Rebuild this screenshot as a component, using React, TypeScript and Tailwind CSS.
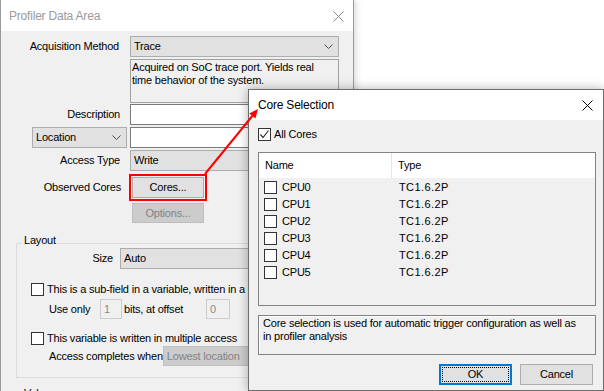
import React from "react";

const Chevron = () => (
  <svg width="9" height="5" viewBox="0 0 9 5" className="shrink-0">
    <path d="M0.5 0.5 L4.5 4.5 L8.5 0.5" stroke="#4d4d4d" strokeWidth="1" fill="none" />
  </svg>
);

const CloseX = ({ color }: { color: string }) => (
  <svg width="11" height="11" viewBox="0 0 11 11" className="shrink-0">
    <path d="M0.5 0.5 L10.5 10.5 M10.5 0.5 L0.5 10.5" stroke={color} strokeWidth="1" fill="none" />
  </svg>
);

const Combo = ({ text, className }: { text: string; className: string }) => (
  <div
    className={
      "flex items-center justify-between h-[21px] border border-[#adadad] bg-[#e1e1e1] pl-[3px] pr-[5px] " +
      className
    }
  >
    <span className="whitespace-nowrap">{text}</span>
    <Chevron />
  </div>
);

const Box = ({ checked }: { checked?: boolean }) => (
  <span className="inline-flex items-center justify-center w-[13px] h-[13px] border border-[#333333] bg-white shrink-0">
    {checked && (
      <svg width="11" height="11" viewBox="0 0 11 11">
        <path d="M1.5 5.5 L4 8.5 L9.5 1.5" stroke="#333333" strokeWidth="1.2" fill="none" />
      </svg>
    )}
  </span>
);

const cores = ["CPU0", "CPU1", "CPU2", "CPU3", "CPU4", "CPU5"];

export default function App() {
  return (
    <div className="relative w-[604px] h-[391px] overflow-hidden bg-white font-['Liberation_Sans',Arial,sans-serif] text-[11px] leading-[13px] tracking-[-0.2px] text-black">
      {/* Main dialog */}
      <div className="w-[354px] h-[420px] border-x border-[#9a9a9a] shadow-[2px_0_6px_rgba(0,0,0,0.15)] flex flex-col">
        <div className="h-[31px] shrink-0 bg-white flex items-center justify-between pl-[8px] pr-[9px] pt-[2px] text-[12px] text-[#9a9a9a]">
          <span>Profiler Data Area</span>
          <CloseX color="#8a8a8a" />
        </div>
        <div className="flex-1 bg-[#f0f0f0] pt-[5px]">
          {/* Acquisition method */}
          <div className="flex items-center h-[21px]">
            <div className="w-[118px] text-right whitespace-nowrap">Acquisition Method</div>
            <Combo text="Trace" className="ml-[11px] w-[209px]" />
          </div>
          <div className="flex mt-[2px]">
            <div className="w-[129px]" />
            <div className="w-[209px] h-[44px] border border-[#a0a0a0] bg-[#f0f0f0] px-[1px] pt-[1px]">
              Acquired on SoC trace port. Yields real
              <br />
              time behavior of the system.
            </div>
          </div>
          <div className="flex items-center h-[21px] mt-[1px]">
            <div className="w-[119px] text-right">Description</div>
            <div className="ml-[10px] w-[209px] h-[21px] border border-[#7a7a7a] bg-white" />
          </div>
          <div className="flex items-center h-[21px] mt-[2px]">
            <Combo text="Location" className="ml-[31px] w-[95px]" />
            <div className="ml-[3px] w-[209px] h-[21px] border border-[#7a7a7a] bg-white" />
          </div>
          <div className="flex items-center h-[21px] mt-[2px]">
            <div className="w-[119px] text-right">Access Type</div>
            <Combo text="Write" className="ml-[10px] w-[209px]" />
          </div>
          <div className="flex items-center h-[27px] mt-[3px]">
            <div className="w-[120px] text-right whitespace-nowrap">Observed Cores</div>
            <div className="ml-[8px] border-2 border-[#ff0000] p-[1px]">
              <div className="w-[72px] h-[21px] border border-[#adadad] bg-[#e1e1e1] flex items-center justify-center">
                Cores...
              </div>
            </div>
          </div>
          <div className="flex mt-[2px]">
            <div className="w-[131px]" />
            <div className="w-[72px] h-[20px] border border-[#bfbfbf] bg-[#cccccc] text-[#838383] flex items-center justify-center">
              Options...
            </div>
          </div>

          {/* Layout group */}
          <div className="relative mt-[20px] ml-[15px] w-[323px] h-[135px] border border-[#dcdcdc]">
            <span className="absolute -top-[10px] left-[5px] px-[2px] bg-[#f0f0f0]">Layout</span>
            <div className="flex items-center h-[21px] mt-[4px]">
              <div className="w-[96px] text-right">Size</div>
              <Combo text="Auto" className="ml-[7px] w-[215px]" />
            </div>
            <div className="flex items-center h-[15px] mt-[13px] pl-[14px]">
              <Box />
              <span className="ml-[3px] whitespace-nowrap">This is a sub-field in a variable, written in a</span>
            </div>
            <div className="flex items-center h-[20px] mt-[2px] pl-[32px]">
              <span className="w-[51px] whitespace-nowrap">Use only</span>
              <div className="w-[22px] h-[20px] border border-[#cccccc] bg-[#f0f0f0] text-[#8a8a8a] pl-[3px] flex items-center">1</div>
              <span className="ml-[2px] w-[82px] whitespace-nowrap">bits, at offset</span>
              <div className="w-[24px] h-[20px] border border-[#cccccc] bg-[#f0f0f0] text-[#8a8a8a] pl-[3px] flex items-center">0</div>
            </div>
            <div className="flex items-center h-[15px] mt-[12px] pl-[14px]">
              <Box />
              <span className="ml-[3px] whitespace-nowrap">This variable is written in multiple access</span>
            </div>
            <div className="flex items-center h-[20px] pl-[32px]">
              <span className="w-[126px] whitespace-nowrap">Access completes when</span>
              <div className="w-[200px] h-[20px] border border-[#bfbfbf] bg-[#cccccc] text-[#838383] pl-[3px] flex items-center whitespace-nowrap">
                Lowest location
              </div>
            </div>
          </div>

          {/* Value group (cut off) */}
          <div className="relative mt-[18px] ml-[15px] w-[323px] h-[40px] border border-[#dcdcdc]">
            <span className="absolute -top-[10px] left-[5px] px-[2px] bg-[#f0f0f0]">Value</span>
          </div>
        </div>
      </div>

      {/* Core Selection dialog */}
      <div className="absolute left-[248px] top-[89px] w-[356px] h-[302px] border border-[#6d6d6d] bg-[#f0f0f0] shadow-[0_0_10px_rgba(0,0,0,0.3)] flex flex-col">
        <div className="h-[30px] shrink-0 bg-white flex items-center justify-between pl-[9px] pr-[10px] text-[12px]">
          <span>Core Selection</span>
          <CloseX color="#000000" />
        </div>
        <div className="pl-[9px] pr-[7px] pt-[8px]">
          <div className="flex items-center h-[13px]">
            <Box checked />
            <span className="ml-[3px]">All Cores</span>
          </div>
          <div className="mt-[11px] w-[338px] h-[154px] border border-[#828282] bg-[#f0f0f0]">
            <div className="h-[25px] bg-white flex items-center">
              <div className="w-[133px] h-full flex items-center pl-[6px] border-r border-[#e5e5e5]">Name</div>
              <div className="pl-[6px]">Type</div>
            </div>
            <div className="pt-[1px]">
              {cores.map((c) => (
                <div key={c} className="flex items-center h-[17px]">
                  <div className="w-[140px] flex items-center pl-[5px]">
                    <Box />
                    <span className="ml-[5px]">{c}</span>
                  </div>
                  <span className="tracking-[0.4px]">TC1.6.2P</span>
                </div>
              ))}
            </div>
          </div>
          <div className="mt-[9px] w-[338px] h-[40px] border border-[#828282] shadow-[inset_1px_1px_0_#ffffff] px-[4px] pt-[1px]">
            Core selection is used for automatic trigger configuration as well as
            <br />
            in profiler analysis
          </div>
          <div className="mt-[9px] flex justify-end gap-[8px] pr-[3px]">
            <div className="w-[73px] h-[21px] border-2 border-[#0078d7] bg-[#e1e1e1]">
              <div className="m-[1px] h-[15px] border border-dotted border-black flex items-center justify-center">OK</div>
            </div>
            <div className="w-[73px] h-[21px] border border-[#adadad] bg-[#e1e1e1] flex items-center justify-center">
              Cancel
            </div>
          </div>
        </div>
      </div>

      {/* Red arrow annotation */}
      <svg className="absolute left-0 top-0 pointer-events-none" width="604" height="391" viewBox="0 0 604 391">
        <line x1="205" y1="174" x2="252.3" y2="116" stroke="#ff0000" strokeWidth="2" />
        <polygon points="258,109 255.4,118.5 249.2,113.5" fill="#ff0000" />
      </svg>
    </div>
  );
}
